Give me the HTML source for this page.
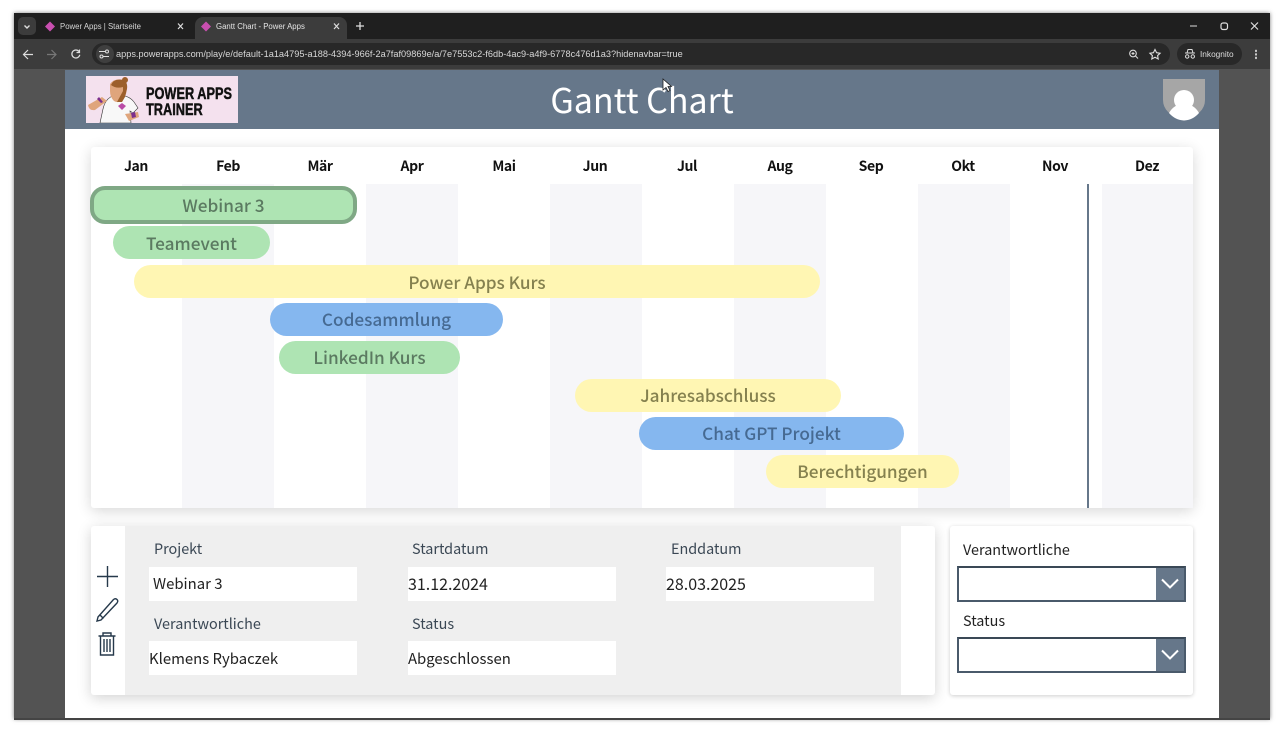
<!DOCTYPE html>
<html><head><meta charset="utf-8"><style>
html,body{margin:0;padding:0;width:1280px;height:732px;overflow:hidden;background:#fff}
*{box-sizing:border-box}
body{font-family:"DejaVu Sans","Liberation Sans",sans-serif;position:relative}
.a{position:absolute}
.t{position:absolute;white-space:nowrap;line-height:1}
.m{position:absolute;top:157px;width:92px;text-align:center;font-size:14px;font-weight:700;color:#111;line-height:18px;letter-spacing:-.4px;font-family:"Noto Sans CJK SC","Liberation Sans",sans-serif}
.s{position:absolute;top:184px;height:324px;width:92px;background:#f6f6f9}
.b{position:absolute;height:33px;border-radius:17px;text-align:center;line-height:31px;font-size:17.2px;font-weight:500;font-family:"Noto Sans CJK SC","Liberation Sans",sans-serif}
.g{background:#aee4b3;color:#5b7a61}.y{background:#fff6b3;color:#85814f}.bl{background:#85b7ef;color:#466a92}
.l{position:absolute;font:14.400px/18px "Noto Sans CJK SC","Liberation Sans",sans-serif;color:#3a4754;letter-spacing:0}
.i{position:absolute;width:208px;height:34px;background:#fff;font:14.900px/33px "Noto Sans CJK SC","Liberation Sans",sans-serif;color:#222}
.d{position:absolute;left:957px;width:229px;height:36px;background:#fff;border:2px solid #4a5a6b;border-top-color:#3a4856}
.d b{position:absolute;right:0;top:0;width:28px;height:32px;background:#66778a}
</style></head><body>
<div class="a" style="left:14px;top:13px;width:1256px;height:706px;background:#535353;box-shadow:0 0 4px rgba(0,0,0,.5)"></div>
<div class="a" style="left:14px;top:13px;width:1256px;height:26px;background:#1f1f1f"></div>
<div class="a" style="left:14px;top:39px;width:1256px;height:30px;background:#3c3c3c"></div>
<div class="a" style="left:18px;top:17px;width:18px;height:18px;border-radius:5px;background:#3c3c3c"></div>
<div class="a" style="left:195px;top:17px;width:152px;height:22px;background:#3c3c3c;border-radius:8px 8px 0 0"></div>
<div class="a" style="left:92px;top:43px;width:1078px;height:22px;border-radius:11px;background:#282828"></div>
<div class="a" style="left:96px;top:45px;width:18px;height:18px;border-radius:9px;background:#3f3f3f"></div>
<div class="a" style="left:1177px;top:43px;width:65px;height:22px;border-radius:11px;background:#282828"></div>
<svg class="a" style="left:14px;top:13px" width="1256" height="56" fill="none" stroke="#ddd">
<path d="M10.500 12.500l2.500 2.500 2.500-2.500" stroke-width="1.400"/>
<path d="M31 13.500l5-5 5 5-5 5z" fill="#c94fb0" stroke="none"/><path d="M187 13.500l5-5 5 5-5 5z" fill="#c94fb0" stroke="none"/>
<path d="M164 10.500l5 5.500M169 10.500l-5 5.500M320 10.500l5 5.500M325 10.500l-5 5.500" stroke-width="1.200"/>
<path d="M346 9v8M342 13h8" stroke-width="1.300"/>
<path d="M1176 13h7" stroke-width="1"/><rect x="1207" y="10" width="6.500" height="6.500" rx="2" stroke-width="1.200"/><path d="M1237 9.500l7 7M1244 9.500l-7 7" stroke-width="1.200"/>
<path d="M19 41.500h-9M14 37l-4.500 4.500 4.500 4.500" stroke-width="1.200"/><path d="M33 41.500h9M37.500 37l4.500 4.500-4.500 4.500" stroke="#777" stroke-width="1.200"/>
<path d="M65 38.500a4 4 0 1 0 .8 3.300M65.500 36.500v3h-3" stroke-width="1.200"/>
<circle cx="1119" cy="40.500" r="3.300" stroke-width="1.100"/><path d="M1121.500 43l2.500 2.500M1117.500 40.500h3M1119 39v3" stroke-width="1"/>
<path d="M1141 36.500l1.600 3.200 3.500.5-2.500 2.400.6 3.400-3.200-1.700-3.200 1.700.6-3.400-2.500-2.400 3.500-.5z" stroke-width="1.100"/>
<path d="M1242 37.500v.8M1242 41v.8M1242 44.500v.8" stroke-width="1.800" stroke-linecap="round"/></svg>
<div class="t" style="left:60px;top:22px;font:7.800px/10px 'Liberation Sans',sans-serif;color:#d5d5d5">Power Apps | Startseite</div>
<div class="t" style="left:216px;top:22px;font:7.800px/10px 'Liberation Sans',sans-serif;color:#e5e5e5">Gantt Chart - Power Apps</div>
<svg class="a" style="left:99px;top:49px" width="12" height="10" fill="none" stroke="#ddd"><path d="M0 2.500h6M10 7.500h-6"/><circle cx="8" cy="2.500" r="1.500"/><circle cx="2.500" cy="7.500" r="1.500"/></svg>
<div class="t" style="left:116px;top:49px;font:9.200px/11px 'Liberation Sans',sans-serif;color:#d8d8d8">apps.powerapps.com/play/e/default-1a1a4795-a188-4394-966f-2a7faf09869e/a/7e7553c2-f6db-4ac9-a4f9-6778c476d1a3?hidenavbar=true</div>
<svg class="a" style="left:1184px;top:49px" width="12" height="10" fill="none" stroke="#ddd"><path d="M1 4h10M3 4l1-3.500h4L9 4" /><circle cx="3.200" cy="7.500" r="1.700"/><circle cx="8.800" cy="7.500" r="1.700"/></svg>
<div class="t" style="left:1200px;top:49px;font:8.300px/11px 'Liberation Sans',sans-serif;color:#ddd">Inkognito</div>

<div class="a" style="left:65px;top:70px;width:1154px;height:649px;background:#fff"></div>
<div class="a" style="left:65px;top:70px;width:1154px;height:59px;background:#66778a"></div>
<div class="a" style="left:14px;top:718px;width:1256px;height:1.500px;background:#444"></div>
<div class="a" style="left:86px;top:76px;width:152px;height:47px;background:#f4e1ee"></div>
<svg class="a" style="left:86px;top:76px" width="60" height="47">
<path d="M14 47l3-14q3-13 14-14 12 0 17 7l4 6-5 5-3-2 1 12z" fill="#f8f8f8" stroke="#333" stroke-width=".6"/>
<path d="M2 29l14-8 5 4-12 9q-6 1-7-5z" fill="#dfa57c"/><path d="M13 21l4 5-2 1-4-4z" fill="#7b2f8e"/>
<path d="M24 8q4-6 13-4 5 3 3 14l-3 5q-4 5-9 2-4-4-4-10z" fill="#dfa57c"/>
<path d="M25 9q3-7 12-5 5 2 4 9l-2 8-3 5h-5l6-11v-4q-7 2-12-2z" fill="#9c5f2b"/><circle cx="39" cy="4" r="3" fill="#9c5f2b"/>
<path d="M32 30l4-3 4 3-4 4z" fill="#b94ca6"/><path d="M39 38l13-2 1 5-10 4z" fill="#dfa57c"/><path d="M45 37l4-1 1 5-4 1z" fill="#7b2f8e"/>
</svg>
<div class="t" style="left:146px;top:86px;font:700 17px/16px 'Liberation Sans',sans-serif;color:#111;transform:scaleX(.75);transform-origin:0 0;-webkit-text-stroke:.5px #111">POWER APPS<br>TRAINER</div>
<div class="t" style="left:442px;top:78px;width:400px;text-align:center;font:34px/42px 'Noto Sans CJK SC','Liberation Sans',sans-serif;color:#fff">Gantt Chart</div>
<svg class="a" style="left:661px;top:78px" width="12" height="16"><path d="M2 1v11l3-2.500 2 4 2-1-2-4h3.500z" fill="#fff" stroke="#222" stroke-width=".8"/></svg>
<svg class="a" style="left:1163px;top:79px" width="43" height="42"><path d="M0 0h42v21q0 14-21 20.500Q0 35 0 21z" fill="#a6a6a6"/><circle cx="21" cy="21" r="10" fill="#fff"/><path d="M6 34q5-9 15-9t15 9q-6 7-15 7.500Q12 41 6 34z" fill="#fff"/></svg>

<div class="a" style="left:91px;top:147px;width:1102px;height:361px;background:#fff;border-radius:3px;box-shadow:0 3px 14px rgba(0,0,0,.16)"></div>
<div class="s" style="left:182px"></div><div class="s" style="left:366px"></div><div class="s" style="left:550px"></div><div class="s" style="left:734px"></div><div class="s" style="left:918px"></div><div class="s" style="left:1102px;width:91px"></div>
<div class="a" style="left:1087px;top:184px;width:2px;height:324px;background:#66778a"></div>
<div class="m" style="left:90px">Jan</div><div class="m" style="left:182px">Feb</div><div class="m" style="left:274px">Mär</div><div class="m" style="left:366px">Apr</div><div class="m" style="left:458px">Mai</div><div class="m" style="left:549px">Jun</div><div class="m" style="left:641px">Jul</div><div class="m" style="left:734px">Aug</div><div class="m" style="left:825px">Sep</div><div class="m" style="left:917px">Okt</div><div class="m" style="left:1009px">Nov</div><div class="m" style="left:1101px">Dez</div>

<div class="b g" style="left:90px;top:186px;width:267px;height:38px;border:4px solid #7fa885;border-radius:15px;line-height:30px">Webinar 3</div>
<div class="b g" style="left:113px;top:226px;width:157px;line-height:33px">Teamevent</div>
<div class="b y" style="left:134px;top:265px;width:686px;line-height:33px">Power Apps Kurs</div>
<div class="b bl" style="left:270px;top:303px;width:233px">Codesammlung</div>
<div class="b g" style="left:279px;top:341px;width:181px">LinkedIn Kurs</div>
<div class="b y" style="left:575px;top:379px;width:266px">Jahresabschluss</div>
<div class="b bl" style="left:639px;top:417px;width:265px">Chat GPT Projekt</div>
<div class="b y" style="left:766px;top:455px;width:193px">Berechtigungen</div>

<div class="a" style="left:91px;top:526px;width:844px;height:169px;background:#fff;border-radius:3px;box-shadow:0 3px 14px rgba(0,0,0,.18)"></div>
<div class="a" style="left:125px;top:526px;width:776px;height:169px;background:#efefef"></div>
<svg class="a" style="left:95px;top:564px" width="26" height="94" fill="none" stroke="#26394b" stroke-width="1.400"><path d="M12.500 2v21M2 12.500h21"/><path d="M3 53l-1 4 4-1 16-17q1.500-2 0-3.500t-3.500 0zM4.500 50.500l4 4"/><path d="M3.500 72h17M8 72v-3h8v3M5.500 72v19h13v-19M9 75v13M12 75v13M15 75v13"/></svg>
<div class="l" style="left:154px;top:540px">Projekt</div><div class="l" style="left:412px;top:540px">Startdatum</div><div class="l" style="left:671px;top:540px">Enddatum</div>
<div class="i" style="left:149px;top:567px;padding-left:4px">Webinar 3</div><div class="i" style="left:408px;top:567px;font-size:16px">31.12.2024</div><div class="i" style="left:666px;top:567px;font-size:16px">28.03.2025</div>
<div class="l" style="left:154px;top:615px">Verantwortliche</div><div class="l" style="left:412px;top:615px">Status</div>
<div class="i" style="left:149px;top:641px;line-height:35px">Klemens Rybaczek</div><div class="i" style="left:408px;top:641px;line-height:35px">Abgeschlossen</div>

<div class="a" style="left:950px;top:526px;width:243px;height:169px;background:#fff;border-radius:3px;box-shadow:0 1px 4px rgba(0,0,0,.2)"></div>
<div class="l" style="left:963px;top:541px;color:#222">Verantwortliche</div>
<div class="l" style="left:963px;top:612px;color:#222">Status</div>
<div class="d" style="top:566px"><b></b></div><div class="d" style="top:637px"><b></b></div>
<svg class="a" style="left:1160px;top:577px" width="20" height="90" fill="none" stroke="#fff" stroke-width="2"><path d="M2 2.500l8 8 8-8M2 73.500l8 8 8-8"/></svg>
</body></html>
